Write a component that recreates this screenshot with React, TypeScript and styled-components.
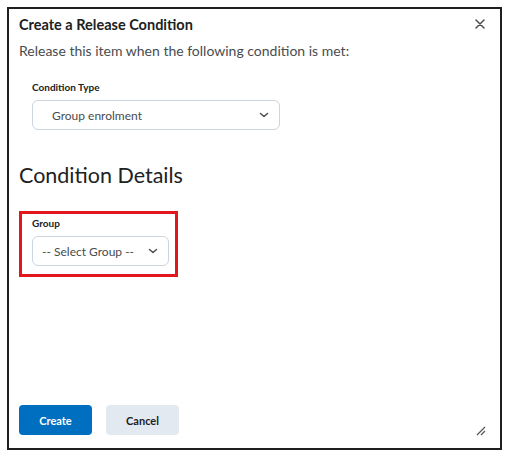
import React from "react";
import styled, { createGlobalStyle } from "styled-components";

const Global = createGlobalStyle`
  html, body { margin: 0; padding: 0; background: #fff; }
  body { font-family: Lato, "Open Sans", sans-serif; color: #202122; }
  * { box-sizing: border-box; }
`;

const Dialog = styled.div`
  margin: 7px 0 0 7px;
  width: 495px;
  height: 443px;
  border: 2px solid #1f1f1f;
  display: flex;
  flex-direction: column;
  padding: 0 10px 13px 10px;
  position: relative;
`;

const Header = styled.div`
  display: flex;
  align-items: center;
  justify-content: space-between;
  height: 30px;
`;

const Title = styled.h1`
  margin: 0;
  font-size: 14.5px;
  font-weight: 700;
  color: #202122;
`;

const Close = styled.button`
  border: none;
  background: none;
  padding: 0;
  width: 20px;
  height: 20px;
  display: flex;
  align-items: center;
  justify-content: center;
  color: #494c4e;
`;

const Intro = styled.p`
  margin: 3px 0 0 0;
  font-size: 14px;
  color: #494c4e;
`;

const Field = styled.div<{ $indent?: number }>`
  display: flex;
  flex-direction: column;
  gap: 7px;
  padding-left: ${(p) => p.$indent ?? 0}px;
`;

const Label = styled.label`
  font-size: 10px;
  font-weight: 700;
  color: #202122;
`;

const Select = styled.div<{ $width: number; $padLeft: number }>`
  width: ${(p) => p.$width}px;
  height: 30px;
  border: 1px solid #cdd5dc;
  border-radius: 6px;
  display: flex;
  align-items: center;
  justify-content: space-between;
  padding: 0 10px 0 ${(p) => p.$padLeft}px;
  font-size: 12px;
  color: #494c4e;
  background: #fff;
`;

const TypeSection = styled.div`
  margin-top: 22px;
`;

const Heading = styled.h2`
  margin: 30px 0 0 0;
  font-size: 21.5px;
  font-weight: 400;
  color: #202122;
  line-height: 30px;
`;

const Highlight = styled.div`
  margin-top: 21px;
  width: 159px;
  border: 3px solid #e3161d;
  padding: 3px 0 8px 10px;
`;

const Spacer = styled.div`
  flex: 1;
`;

const Footer = styled.div`
  display: flex;
  gap: 14px;
`;

const Button = styled.button<{ $primary?: boolean }>`
  width: 73px;
  height: 30px;
  border: none;
  border-radius: 4px;
  font-family: Lato, sans-serif;
  font-size: 11px;
  font-weight: 700;
  background: ${(p) => (p.$primary ? "#006fbf" : "#e3e9f1")};
  color: ${(p) => (p.$primary ? "#fff" : "#202122")};
`;

const Resize = styled.div`
  position: absolute;
  right: 14px;
  bottom: 18px;
  width: 10px;
  height: 10px;
`;

const Chevron = () => (
  <svg width="10" height="6" viewBox="0 0 10 6">
    <path d="M1.5 1.5 L5 4.5 L8.5 1.5" fill="none" stroke="#494c4e" strokeWidth="1.5" strokeLinecap="round" strokeLinejoin="round" />
  </svg>
);

export default function App() {
  return (
    <>
      <Global />
      <Dialog>
        <Header>
          <Title>Create a Release Condition</Title>
          <Close aria-label="Close">
            <svg width="10" height="10" viewBox="0 0 10 10">
              <path d="M1 1 L9 9 M9 1 L1 9" stroke="#494c4e" strokeWidth="1.5" strokeLinecap="round" />
            </svg>
          </Close>
        </Header>
        <Intro>Release this item when the following condition is met:</Intro>
        <TypeSection>
          <Field $indent={13}>
            <Label>Condition Type</Label>
            <Select $width={248} $padLeft={19}>
              <span>Group enrolment</span>
              <Chevron />
            </Select>
          </Field>
        </TypeSection>
        <Heading>Condition Details</Heading>
        <Highlight>
          <Field>
            <Label>Group</Label>
            <Select $width={137} $padLeft={9}>
              <span>-- Select Group --</span>
              <Chevron />
            </Select>
          </Field>
        </Highlight>
        <Spacer />
        <Footer>
          <Button $primary>Create</Button>
          <Button>Cancel</Button>
        </Footer>
        <Resize>
          <svg width="10" height="10" viewBox="0 0 10 10">
            <path d="M1 9 L9 1 M5 9 L9 5" stroke="#555" strokeWidth="1.2" />
          </svg>
        </Resize>
      </Dialog>
    </>
  );
}
